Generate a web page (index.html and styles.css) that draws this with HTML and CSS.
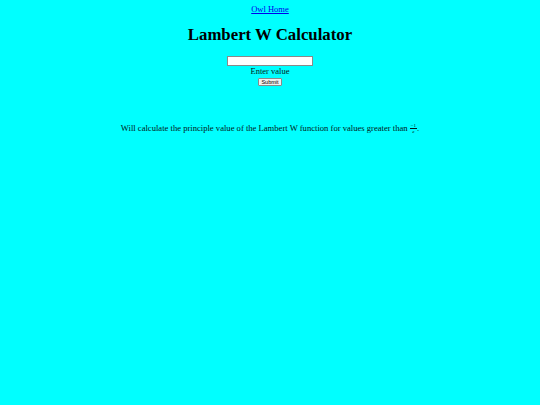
FILE: index.html
```html
<!DOCTYPE html>
<html>
<head>
<meta charset="utf-8">
<link rel="stylesheet" href="styles.css">
</head>
<body class="page">
<div class="top">
<a class="home" href="#">Owl Home</a>
<h1 class="title">Lambert W Calculator</h1>
<form class="calc">
<input class="field" type="text"><br>
<span class="label">Enter value</span><br>
<button class="submit" type="button">Submit</button>
</form>
</div>
<p class="note">Will calculate the principle value of the Lambert W function for values greater than <span class="frac"><span class="num">&minus;1</span><span class="den">e</span></span>.</p>
</body>
</html>
```
FILE: styles.css
```css
html { background: #00ffff; }
.page {
  margin: 4px;
  font-family: "Liberation Serif", "Times New Roman", serif;
  font-size: 8.5px;
  color: #000;
  background: #00ffff;
}
.top { text-align: center; }
.home { color: #0000ee; }
.title {
  font-size: 16.8px;
  font-weight: bold;
  margin: 11px 0;
}
.calc { margin: 0; line-height: 1.2; }
.field {
  box-sizing: border-box;
  width: 86px;
  height: 10px;
  padding: 0 1px;
  border: 1px solid #8a8a8a;
  background: #fff;
  font-size: 7px;
  margin: 0;
  vertical-align: top;
}
.label { color: #001a1a; }
.submit {
  box-sizing: border-box;
  font-family: "Liberation Sans", Arial, sans-serif;
  font-size: 5.5px;
  width: 24px;
  height: 8px;
  line-height: 1;
  padding: 0;
  border: 1px solid #8a8a8a;
  border-radius: 1px;
  background: #efefef;
  margin: 2px 0 0;
  vertical-align: top;
}
.note {
  text-align: center;
  margin-top: 36px;
  font-size: 8.6px;
  color: #001a1a;
}
.frac {
  display: inline-flex;
  flex-direction: column;
  align-items: center;
  vertical-align: middle;
  font-size: 5px;
  line-height: 1;
}
.num { border-bottom: 0.6px solid #001a1a; padding: 0 1px; }
.den { font-style: italic; }
```
